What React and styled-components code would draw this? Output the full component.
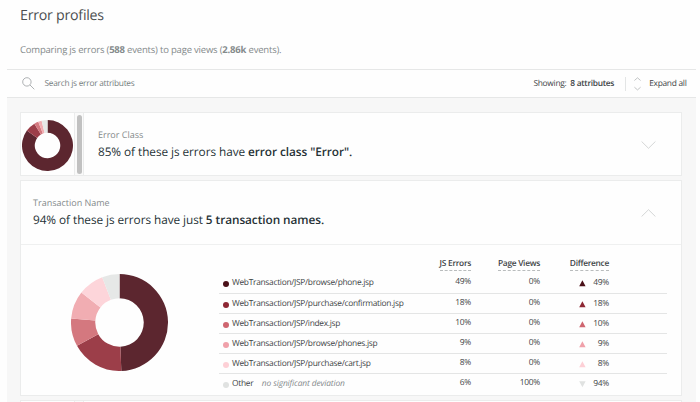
import React from "react";
import styled, { createGlobalStyle } from "styled-components";

const GlobalStyle = createGlobalStyle`
  * { box-sizing: border-box; }
  body { margin: 0; background: #fefefe; overflow: hidden; text-rendering: geometricPrecision; }
  b { font-weight: 600; }
`;

const Page = styled.main`
  width: 700px;
  height: 402px;
  overflow: hidden;
  padding-left: 7px;
  padding-right: 4px;
  background: #fefefe;
  font-family: "Open Sans", "Noto Sans", sans-serif;
  color: #3f4547;
  white-space: nowrap;
`;

const Header = styled.header`
  height: 69px;
  padding: 6px 13px 0;
`;

const Title = styled.h1`
  margin: 0;
  font-size: 14.2px;
  line-height: 20px;
  letter-spacing: -0.24px;
  font-weight: 400;
  color: #4b4e50;
`;

const Summary = styled.p`
  margin: 17px 0 0;
  font-size: 9.5px;
  line-height: 14px;
  letter-spacing: -0.195px;
  color: #858b8c;
  b { font-weight: 700; }
`;

const Toolbar = styled.div`
  display: flex;
  align-items: center;
  height: 29px;
  padding: 0 9.5px 0 15px;
  border-top: 1px solid #e6e7e7;
  border-bottom: 1px solid #e6e7e7;
  font-size: 8.4px;
  letter-spacing: -0.28px;
`;

const SearchHint = styled.span`
  flex: 1;
  margin-left: 9.5px;
  color: #777e81;
`;

const Showing = styled.span`
  b { margin-left: 2px; }
`;

const ToolbarDivider = styled.span`
  width: 1px;
  height: 14px;
  margin: 0 8px 0 11px;
  background: #e3e5e5;
`;

const ExpandLabel = styled.span`
  margin-left: 8px;
`;

const Panel = styled.section`
  display: flex;
  flex-direction: column;
  gap: 4px;
  height: 304px;
  padding: 14px 14px 0 13px;
  background: #f7f7f7;
`;

const Card = styled.article`
  flex: none;
  height: ${(p) => p.$height}px;
  border: 1px solid #ebecec;
  background: #fefefe;
`;

const CollapsedCard = styled(Card)`
  display: flex;
`;

const Thumbnail = styled.div`
  display: flex;
  align-items: center;
  justify-content: center;
  width: 53px;
  height: 100%;
  padding-top: 3px;
`;

const ScrollTrack = styled.div`
  width: 10px;
  height: 100%;
  padding: 2px 0 0 2px;
  border: solid #ebecec;
  border-width: 0 1px;
  background: #fafafa;
`;

const ScrollThumb = styled.div`
  width: 5px;
  height: 59px;
  border-radius: 3px;
  background: #c1c1c1;
`;

const Heading = styled.div`
  display: flex;
  align-items: center;
  flex: 1;
  height: ${(p) => p.$height}px;
  padding: 0 25px 0 ${(p) => p.$indent}px;
`;

const HeadingText = styled.div`
  flex: 1;
`;

const Attribute = styled.div`
  font-size: 9px;
  line-height: 14px;
  color: #858b8c;
`;

const Finding = styled.h2`
  margin: 2px 0 0;
  font-size: 11.8px;
  line-height: 17px;
  letter-spacing: -0.06px;
  font-weight: 400;
  color: #263236;
`;

const Details = styled.div`
  display: flex;
  height: 150px;
  border-top: 1px solid #eff0f0;
`;

const ChartArea = styled.div`
  width: 198px;
  padding: 28.5px 0 0 50.3px;
`;

const Table = styled.div`
  width: 448px;
  padding-top: 12px;
  font-size: 8.4px;
  letter-spacing: -0.29px;
`;

const Columns = styled.div`
  display: grid;
  grid-template-columns: 193px 59px 69px 69px 58px;
`;

const TableHead = styled(Columns)`
  height: 16px;
  justify-items: end;
  font-weight: 600;
  line-height: 14px;
`;

const HeadLabel = styled.span`
  height: 14px;
  border-bottom: 1px dashed #b9bcbd;
`;

const Row = styled(Columns)`
  height: 20px;
  line-height: 12px;
  padding-top: 3px;
  & + & { border-top: 1px solid #e4e5e5; }
`;

const Name = styled.span`
  display: flex;
  align-items: center;
  height: 14px;
  padding-left: 4px;
`;

const Dot = styled.i`
  width: 6px;
  height: 6px;
  margin: 1px 3px 0 0;
  border-radius: 50%;
  background: ${(p) => p.$color};
`;

const Note = styled.em`
  margin-left: 8.5px;
  letter-spacing: -0.12px;
  color: #858a8c;
`;

const Value = styled.span`
  text-align: right;
`;

const Difference = styled.span`
  display: flex;
  align-items: center;
  justify-content: space-between;
  height: 14px;
  padding-left: 39px;
`;

const Drawing = styled.svg`
  display: block;
  flex: none;
  fill: none;
`;

const COLORS = ["#5c262f", "#9c3e49", "#d4787f", "#f1adb2", "#fdd5da", "#e6e8e7"];

function Donut({ size, values }) {
  const total = values.reduce((a, b) => a + b, 0);
  let sum = 0;
  const point = (v, r) => {
    const a = (v / total) * Math.PI * 2;
    return `${Math.sin(a) * r} ${-Math.cos(a) * r}`;
  };
  return (
    <Drawing width={size} height={size} viewBox="-50 -50 100 100">
      {values.map((v, i) => {
        const start = sum;
        sum += v;
        const large = v / total > 0.5 ? 1 : 0;
        return (
          <path
            key={i}
            fill={COLORS[i]}
            d={`M${point(start, 50)}A50 50 0 ${large} 1 ${point(sum, 50)}L${point(sum, 25)}A25 25 0 ${large} 0 ${point(start, 25)}Z`}
          />
        );
      })}
    </Drawing>
  );
}

const Chevron = ({ up }) => (
  <Drawing width="15" height="9" viewBox="0 0 15 9" stroke="#c9cbcc" strokeWidth="0.8">
    <path d={up ? "M.6 8.5 7.5 1.7l6.9 6.8" : "M.6 1.5 7.5 8.3 14.4 1.5"} />
  </Drawing>
);

const Triangle = ({ color, down }) => (
  <Drawing width="7" height="7" viewBox="0 0 7 7">
    <path fill={color} d={down ? "M.2.3h6.4L3.4 6.3Z" : "M.2 6.3h6.4L3.4.3Z"} />
  </Drawing>
);

const ROWS = [
  ["WebTransaction/JSP/browse/phone.jsp", "49%", "0%", "49%", "#4b1119"],
  ["WebTransaction/JSP/purchase/confirmation.jsp", "18%", "0%", "18%", "#8e2834"],
  ["WebTransaction/JSP/index.jsp", "10%", "0%", "10%", "#cf6670"],
  ["WebTransaction/JSP/browse/phones.jsp", "9%", "0%", "9%", "#f0a1aa"],
  ["WebTransaction/JSP/purchase/cart.jsp", "8%", "0%", "8%", "#fdd0d6"],
  ["Other", "6%", "100%", "94%", "#e0e2e1"],
];

export default function App() {
  return (
    <Page>
      <GlobalStyle />
      <Header>
        <Title>Error profiles</Title>
        <Summary>
          Comparing js errors (<b>588</b> events) to page views (<b>2.86k</b> events).
        </Summary>
      </Header>
      <Toolbar>
        <Drawing width="13" height="13" viewBox="0 0 13 13" stroke="#999d9f" strokeWidth="0.8">
          <circle cx="4.9" cy="4.9" r="4.2" />
          <path d="m8 8 4.3 4.3" />
        </Drawing>
        <SearchHint>Search js error attributes</SearchHint>
        <Showing>Showing: <b>8 attributes</b></Showing>
        <ToolbarDivider />
        <Drawing width="7" height="14" viewBox="0 0 7 14" stroke="#a9acad" strokeWidth="0.7">
          <path d="M.4 3.5 3.5.8l3.1 2.7M.4 10.2l3.1 2.7 3.1-2.7" />
        </Drawing>
        <ExpandLabel>Expand all</ExpandLabel>
      </Toolbar>
      <Panel>
        <CollapsedCard $height={64}>
          <Thumbnail>
            <Donut size={51} values={[85, 6.4, 2.7, 2.2, 0, 3.7]} />
          </Thumbnail>
          <ScrollTrack><ScrollThumb /></ScrollTrack>
          <Heading $height={62} $indent={14}>
            <HeadingText>
              <Attribute>Error Class</Attribute>
              <Finding>85% of these js errors have <b>error class "Error".</b></Finding>
            </HeadingText>
            <Chevron />
          </Heading>
        </CollapsedCard>
        <Card $height={216}>
          <Heading $height={63} $indent={12}>
            <HeadingText>
              <Attribute>Transaction Name</Attribute>
              <Finding>94% of these js errors have just <b>5 transaction names.</b></Finding>
            </HeadingText>
            <Chevron up />
          </Heading>
          <Details>
            <ChartArea>
              <Donut size={97} values={[49.4, 17.6, 9.3, 9.3, 8.6, 5.8]} />
            </ChartArea>
            <Table>
              <TableHead>
                <span />
                <HeadLabel>JS Errors</HeadLabel>
                <HeadLabel>Page Views</HeadLabel>
                <HeadLabel>Difference</HeadLabel>
              </TableHead>
              {ROWS.map(([name, errors, views, diff, color]) => (
                <Row key={name}>
                  <Name>
                    <Dot $color={color} />
                    {name}
                    {name === "Other" && <Note>no significant deviation</Note>}
                  </Name>
                  <Value>{errors}</Value>
                  <Value>{views}</Value>
                  <Difference>
                    <Triangle color={color} down={name === "Other"} />
                    {diff}
                  </Difference>
                </Row>
              ))}
            </Table>
          </Details>
        </Card>
        <CollapsedCard $height={64}>
          <Thumbnail />
          <ScrollTrack />
        </CollapsedCard>
      </Panel>
    </Page>
  );
}
